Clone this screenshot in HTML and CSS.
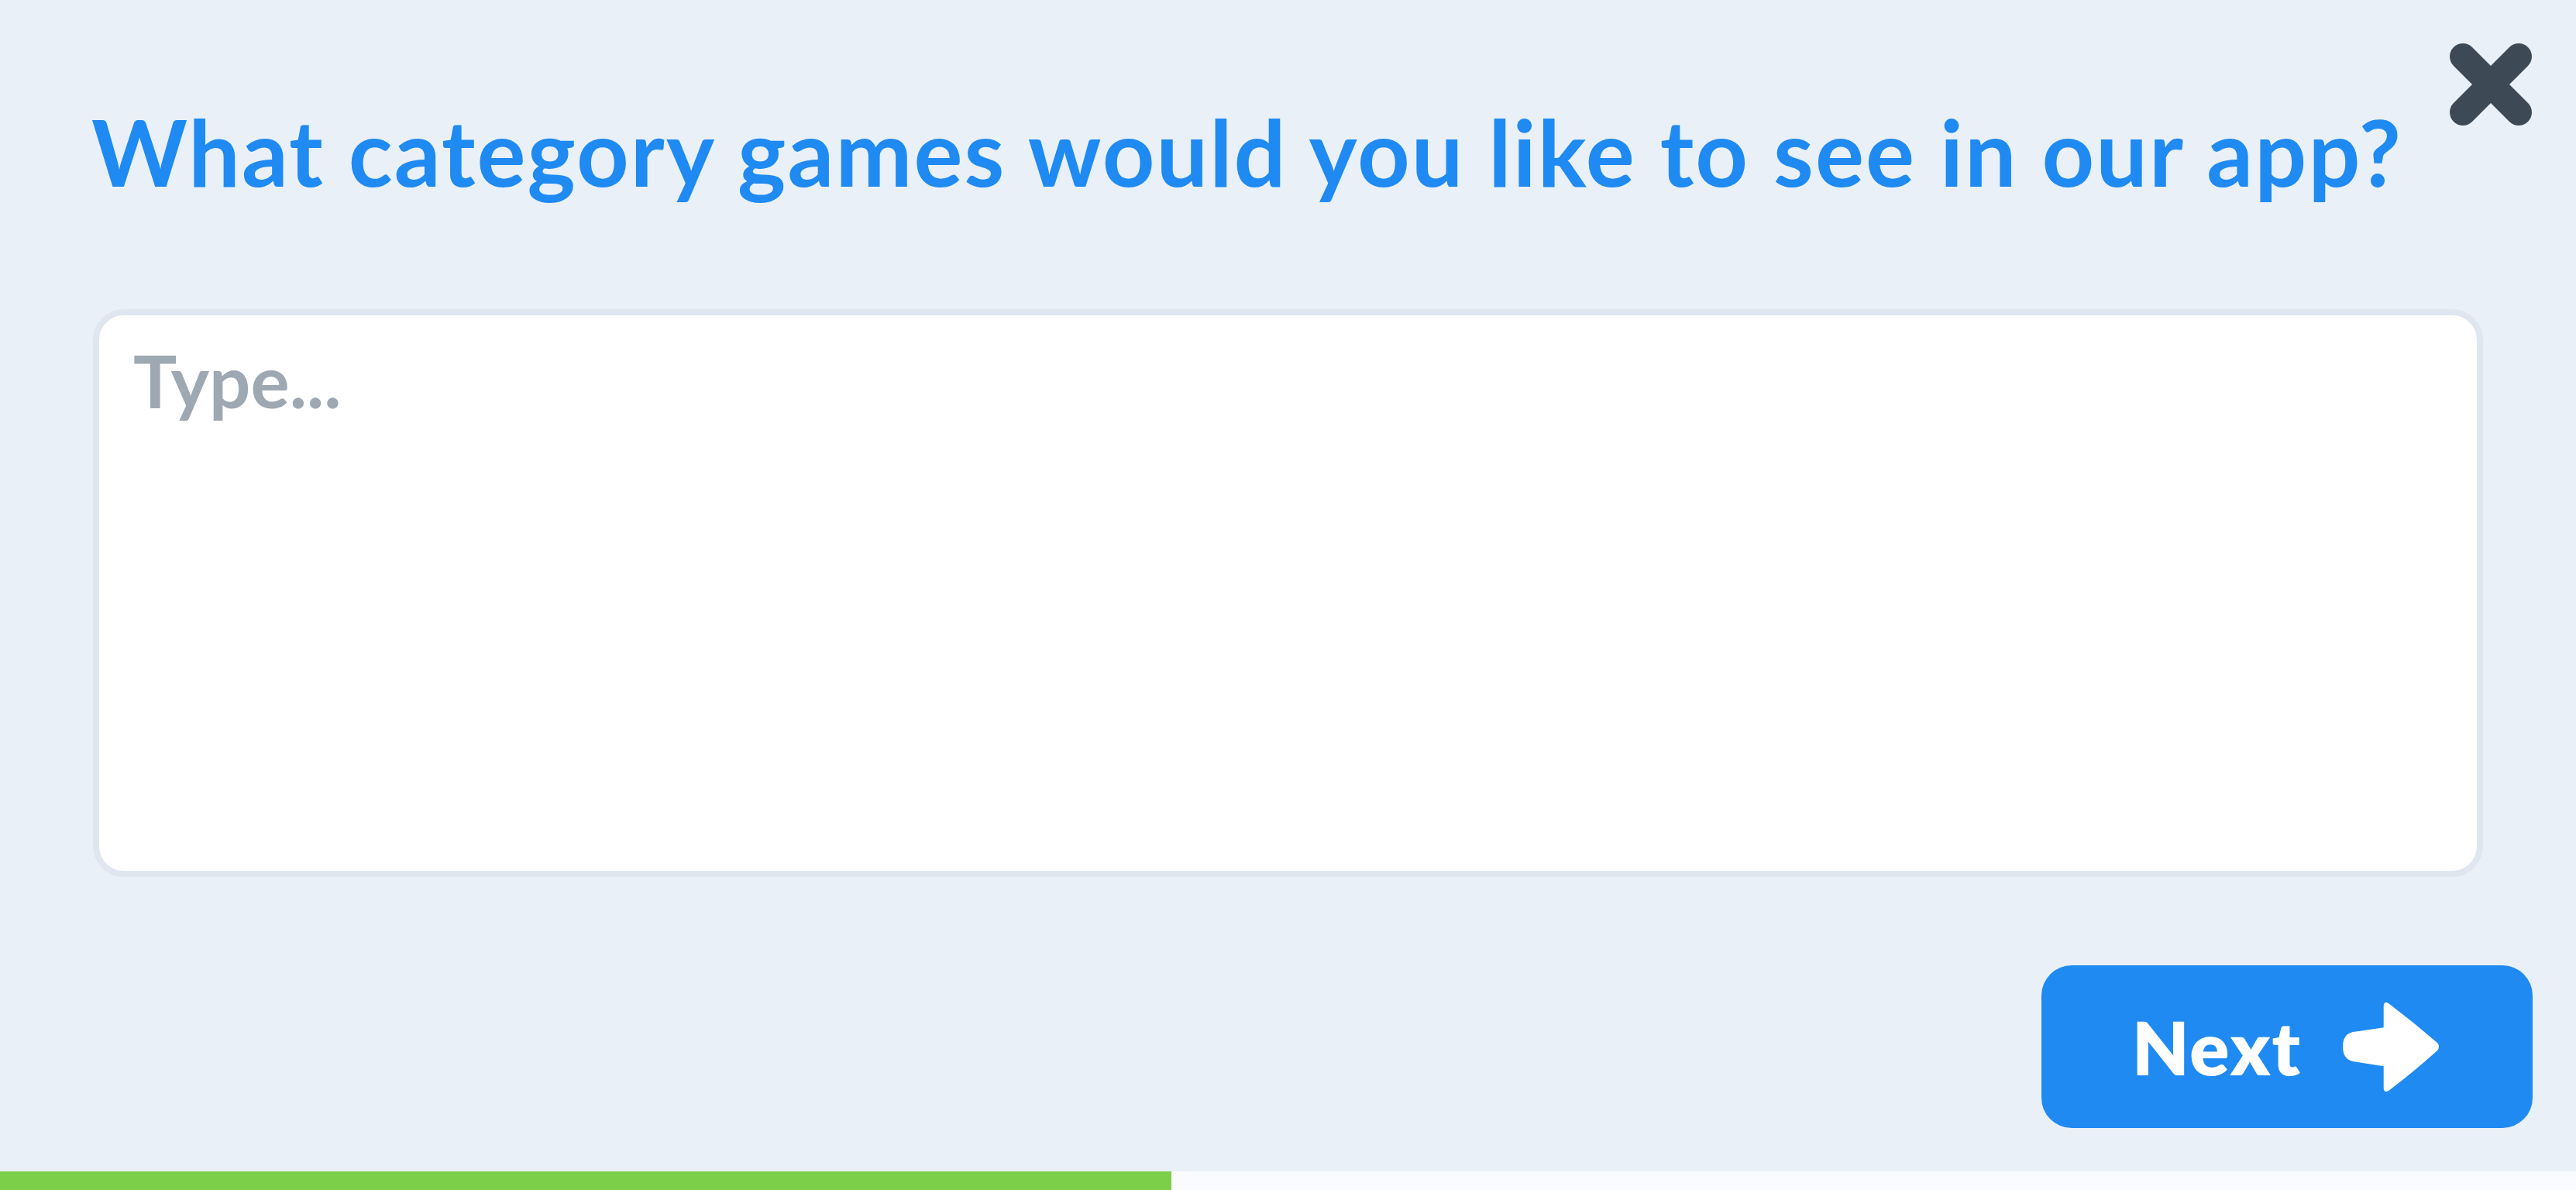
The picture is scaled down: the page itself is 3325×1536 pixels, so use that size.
FILE: index.html
```html
<!DOCTYPE html>
<html lang="en">
<head>
<meta charset="utf-8">
<title>Survey</title>
<link rel="stylesheet" href="styles.css">
</head>
<body>
<div class="screen">
  <button class="close" aria-label="Close">
    <svg viewBox="0 0 106 106" width="106" height="106"><path d="M17 17 L89 89 M89 17 L17 89" stroke="#3d4a56" stroke-width="34" stroke-linecap="round" fill="none"/></svg>
  </button>
  <main class="content">
    <h1 class="question">What category games would you like to see in our app?</h1>
    <textarea class="answer" placeholder="Type..."></textarea>
    <div class="actions">
      <button class="next">
        <span class="next-label">Next</span>
        <svg class="next-arrow" viewBox="0 0 125 117" width="125" height="117"><path d="M52.7 33.3 L52.7 6 Q52.7 -1 59 2 Q92 27 122 53 Q126 58 122 63 Q92 90 59 115 Q52.7 118 52.7 111 L52.7 83.3 L13 77 Q0 74 0 58 Q0 42 13 39 Z" fill="#ffffff"/></svg>
      </button>
    </div>
  </main>
  <div class="progress"><div class="progress-fill" style="width:45.47%"></div></div>
</div>
</body>
</html>
```
FILE: styles.css
```css
* { box-sizing: border-box; }
html, body { margin: 0; padding: 0; }
body {
  background: #e9f0f8;
  font-family: "Lato", "Noto Sans", "DejaVu Sans", sans-serif;
}
.screen {
  position: relative;
  height: 1536px;
  display: flex;
  flex-direction: column;
  overflow: hidden;
}
.close {
  position: absolute;
  top: 56px;
  right: 57px;
  width: 106px;
  height: 106px;
  padding: 0;
  border: 0;
  background: none;
}
.close svg { display: block; }
.content {
  flex: 1;
  display: flex;
  flex-direction: column;
  padding: 0 56px 0 120px;
}
.question {
  margin: 126px 0 0 -2px;
  font-size: 118px;
  line-height: 140px;
  font-weight: 700;
  letter-spacing: 2.1px;
  color: #1f8af2;
  white-space: nowrap;
}
.answer {
  margin-top: 133px;
  margin-right: 64px;
  height: 733px;
  border: 8px solid #dfe6ef;
  border-radius: 40px;
  background: #ffffff;
  padding: 27px 44px;
  font-family: inherit;
  font-size: 94px;
  font-weight: 700;
  color: #2b3440;
  resize: none;
  outline: none;
}
.answer::placeholder { color: #9ea8b3; }
.actions {
  margin-top: 114px;
  display: flex;
  justify-content: flex-end;
}
.next {
  width: 634px;
  height: 210px;
  border: 0;
  border-radius: 39px;
  background: #1f8af2;
  display: flex;
  align-items: center;
  justify-content: space-between;
  padding: 0 120px 0 117px;
  font-family: inherit;
}
.next-label {
  color: #ffffff;
  font-size: 95px;
  font-weight: 800;
  line-height: 1;
  letter-spacing: 2px;
}
.next-arrow { display: block; }
.progress {
  height: 24px;
  background: #f9fbfe;
}
.progress-fill {
  height: 100%;
  background: #7ccf48;
}
```
